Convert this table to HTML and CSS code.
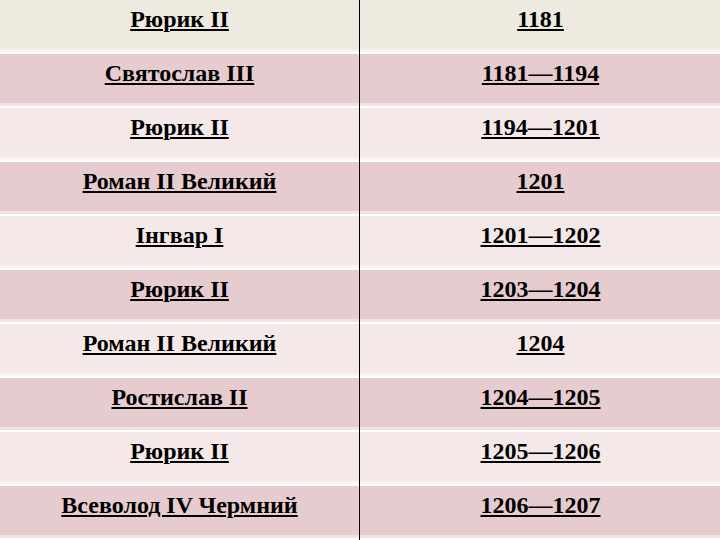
FILE: index.html
```html
<!DOCTYPE html>
<html>
<head>
<meta charset="utf-8">
<link rel="stylesheet" href="styles.css">
</head>
<body>
<div class="table">
  <div class="row head"><div class="cell name">Рюрик II</div><div class="cell year">1181</div></div>
  <div class="row dark"><div class="cell name">Святослав III</div><div class="cell year">1181—1194</div></div>
  <div class="row light"><div class="cell name">Рюрик II</div><div class="cell year">1194—1201</div></div>
  <div class="row dark"><div class="cell name">Роман II Великий</div><div class="cell year">1201</div></div>
  <div class="row light"><div class="cell name">Інгвар I</div><div class="cell year">1201—1202</div></div>
  <div class="row dark"><div class="cell name">Рюрик II</div><div class="cell year">1203—1204</div></div>
  <div class="row light"><div class="cell name">Роман II Великий</div><div class="cell year">1204</div></div>
  <div class="row dark"><div class="cell name">Ростислав II</div><div class="cell year">1204—1205</div></div>
  <div class="row light"><div class="cell name">Рюрик II</div><div class="cell year">1205—1206</div></div>
  <div class="row dark"><div class="cell name">Всеволод IV Чермний</div><div class="cell year">1206—1207</div></div>
</div>
</body>
</html>
```

FILE: styles.css
```css
html, body {
  margin: 0;
  padding: 0;
  background: #ffffff;
}
.table {
  width: 720px;
  display: flex;
  flex-direction: column;
  font-family: "Liberation Serif", "Times New Roman", serif;
  font-weight: bold;
  font-size: 24px;
  color: #000;
}
.row {
  display: flex;
  height: 54px;
}
.cell {
  box-sizing: border-box;
  height: 54px;
  padding-top: 5px;
  text-align: center;
  line-height: 28px;
  text-decoration: underline;
  text-decoration-thickness: 2px;
  text-underline-offset: 2px;
  box-shadow: inset 0 -2px 0 #ffffff, inset 0 -5px 0 rgba(255,255,255,0.45);
}
.name {
  width: 360px;
  border-right: 1px solid #000;
}
.year {
  width: 360px;
  padding-left: 1px;
}
.head .cell { background: #eeeae0; }
.dark .cell { background: #e6cbcf; }
.light .cell { background: #f4e9e8; }
```
